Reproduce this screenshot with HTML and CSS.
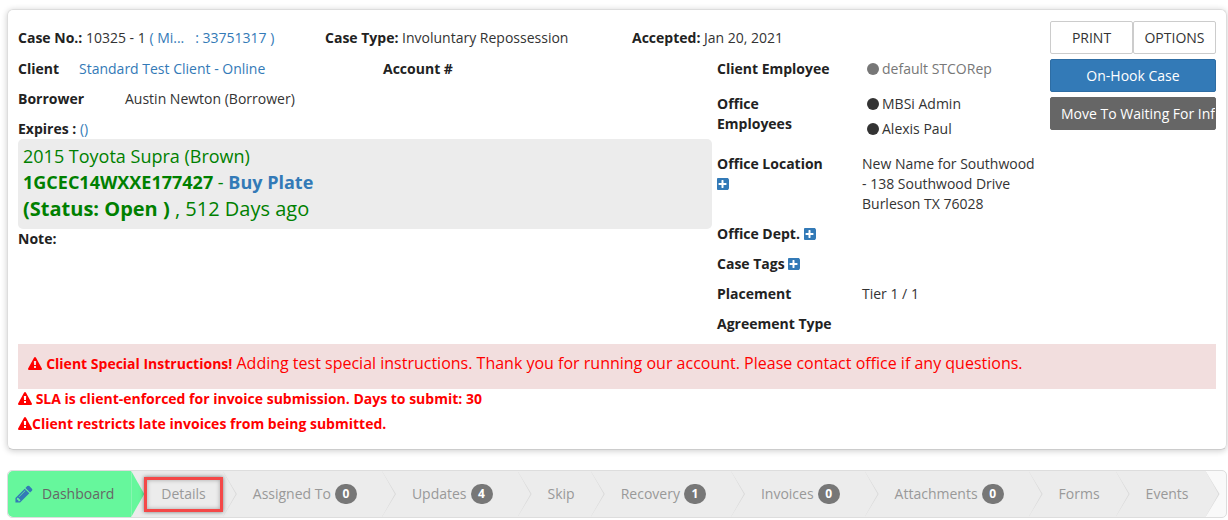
FILE: index.html
```html
<!DOCTYPE html>
<html lang="en">
  <head>
    <meta charset="UTF-8" />
    <title>Case 10325</title>
    <link rel="stylesheet" href="styles.css">
  </head>
  <body class="body">
    <svg class="icon-defs" width="0" height="0">
      <symbol id="i-plus" viewBox="128 128 1536 1536"><path d="M1344 960v-128q0-26-19-45t-45-19h-320v-320q0-26-19-45t-45-19h-128q-26 0-45 19t-19 45v320h-320q-26 0-45 19t-19 45v128q0 26 19 45t45 19h320v320q0 26 19 45t45 19h128q26 0 45-19t19-45v-320h320q26 0 45-19t19-45zm320-576v1024q0 119-84.5 203.5t-203.5 84.5h-1024q-119 0-203.5-84.5t-84.5-203.5v-1024q0-119 84.5-203.5t203.5-84.5h1024q119 0 203.5 84.5t84.5 203.5z"/></symbol>
      <symbol id="i-warn" viewBox="0 0 1792 1792"><path d="M1024 1375v-190q0-14-9.5-23.5t-22.5-9.5h-192q-13 0-22.5 9.5t-9.5 23.5v190q0 14 9.5 23.5t22.5 9.5h192q13 0 22.5-9.5t9.5-23.5zm-2-374l18-459q0-12-10-19-13-11-24-11h-220q-11 0-24 11-10 7-10 21l17 457q0 10 10 16.5t24 6.5h185q14 0 23.5-6.5t10.5-16.5zm-14-934l768 1408q35 63-2 126-17 29-46.5 46t-63.5 17h-1536q-34 0-63.5-17t-46.5-46q-37-63-2-126l768-1408q17-31 47-49t65-18 65 18 47 49z"/></symbol>
    </svg>

    <div class="card">
      <div class="card__top">
        <div class="info">
          <div class="summary">
            <div class="summary__item"><b>Case No.:</b> 10325 - 1 <a class="link">( Mi...&nbsp;&nbsp; : 33751317 )</a></div>
            <div class="summary__item"><b>Case Type:</b> Involuntary Repossession</div>
            <div class="summary__item"><b>Accepted:</b> Jan 20, 2021</div>
          </div>
          <div class="columns">
            <div class="left">
              <div class="row">
                <b class="row__client">Client</b>
                <a class="link row__clientname">Standard Test Client - Online</a>
                <b>Account #</b>
              </div>
              <div class="row">
                <b class="row__borrower">Borrower</b>
                <span>Austin Newton (Borrower)</span>
              </div>
              <div class="row row_tight"><b>Expires :</b>&nbsp;<a class="link">()</a></div>
              <div class="vehicle">
                <div>2015 Toyota Supra (Brown)</div>
                <div><b>1GCEC14WXXE177427</b> - <a class="vehicle__link">Buy Plate</a></div>
                <div class="vehicle__status"><b>(Status: Open )</b> , 512 Days ago</div>
              </div>
              <div class="note"><b>Note:</b></div>
            </div>
            <div class="right">
              <div class="detail">
                <b class="detail__label">Client Employee</b>
                <div class="detail__value"><span class="person person_idle"><i class="dot"></i>default STCORep</span></div>
              </div>
              <div class="detail">
                <b class="detail__label">Office<br />Employees</b>
                <div class="detail__value">
                  <span class="person"><i class="dot"></i>MBSi Admin</span>
                  <span class="person"><i class="dot"></i>Alexis Paul</span>
                </div>
              </div>
              <div class="detail">
                <b class="detail__label">Office Location<br /><svg class="plus"><use href="#i-plus" /></svg></b>
                <div class="detail__text">New Name for Southwood<br />- 138 Southwood Drive<br />Burleson TX 76028</div>
              </div>
              <div class="detail">
                <b class="detail__label">Office Dept. <svg class="plus"><use href="#i-plus" /></svg></b>
              </div>
              <div class="detail">
                <b class="detail__label">Case Tags <svg class="plus"><use href="#i-plus" /></svg></b>
              </div>
              <div class="detail">
                <b class="detail__label">Placement</b>
                <div class="detail__text">Tier 1 / 1</div>
              </div>
              <div class="detail">
                <b class="detail__label">Agreement Type</b>
              </div>
            </div>
          </div>
        </div>
        <div class="actions">
          <div class="actions__pair">
            <button class="button" type="button">PRINT</button>
            <button class="button" type="button">OPTIONS</button>
          </div>
          <button class="button button_blue" type="button">On-Hook Case</button>
          <button class="button button_gray" type="button">Move To Waiting For Info</button>
        </div>
      </div>
      <div class="instructions">
        <svg class="warn"><use href="#i-warn" /></svg>
        <b class="instructions__title">Client Special Instructions!</b> Adding test special instructions. Thank you for running our account. Please contact office if any questions.
      </div>
      <div class="alert"><svg class="warn"><use href="#i-warn" /></svg> SLA is client-enforced for invoice submission. Days to submit: 30</div>
      <div class="alert alert_last"><svg class="warn"><use href="#i-warn" /></svg>Client restricts late invoices from being submitted.</div>
    </div>

    <nav class="tabs">
      <ul class="tabs__list">
        <li class="tab tab_active">
          <svg class="tab__icon" viewBox="0 0 1792 1792"><path d="M491 1536l91-91-235-235-91 91v107h128v128h107zm523-928q0-22-22-22-10 0-17 7l-542 542q-7 7-7 17 0 22 22 22 10 0 17-7l542-542q7-7 7-17zm-54-192l416 416-832 832h-416v-416zm683 96q0 53-37 90l-166 166-416-416 166-165q36-38 90-38 53 0 91 38l235 234q37 39 37 91z"/></svg>
          Dashboard
        </li>
        <li class="tab">Details<span class="tab__mark"></span></li>
        <li class="tab tab_count">Assigned To<span class="badge">0</span></li>
        <li class="tab tab_count">Updates<span class="badge">4</span></li>
        <li class="tab tab_short">Skip</li>
        <li class="tab tab_count">Recovery<span class="badge">1</span></li>
        <li class="tab tab_count">Invoices<span class="badge">0</span></li>
        <li class="tab tab_count">Attachments<span class="badge">0</span></li>
        <li class="tab tab_short">Forms</li>
        <li class="tab">Events</li>
      </ul>
    </nav>
  </body>
</html>
```

FILE: styles.css
```css
* {
  box-sizing: border-box;
}
.body {
  margin: 0;
  padding: 9px 1px 0 7px;
  background-color: #fff;
  font-family: "Open Sans", sans-serif;
  font-size: 14px;
  line-height: 20px;
  color: #333;
  overflow: hidden;
}
.icon-defs {
  position: absolute;
}
b {
  color: #222;
}
.link {
  color: #337ab7;
}

/* case card */
.card {
  height: 441px;
  padding: 11px 10px 0;
  border: 1px solid #ddd;
  border-bottom-color: #ccc;
  border-radius: 6px;
  box-shadow: 0 1px 6px rgba(0, 0, 0, 0.2);
}
.card__top {
  display: flex;
  height: 323px;
}
.info {
  width: 1032px;
  padding-top: 7px;
}
.summary {
  display: flex;
  height: 31px;
}
.summary__item {
  width: 307px;
}
.columns {
  display: flex;
}
.left {
  width: 694px;
}
.right {
  margin-left: 5px;
}
.row {
  display: flex;
  margin-bottom: 10px;
}
.row_tight {
  margin-bottom: 0;
}
.row__client {
  width: 61px;
}
.row__clientname {
  width: 304px;
}
.row__borrower {
  width: 107px;
}
.vehicle {
  height: 90px;
  padding: 4px 5px;
  border-radius: 5px;
  background-color: #ececec;
  font-size: 18px;
  line-height: 26px;
  color: green;
}
.vehicle b {
  color: green;
}
.vehicle__status {
  margin-top: 1px;
  font-size: 20px;
}
.vehicle__link {
  color: #337ab7;
  font-weight: bold;
}

/* right hand details */
.detail {
  display: flex;
  margin-bottom: 10px;
}
.detail__label {
  flex: none;
  width: 145px;
}
.detail__value {
  display: flex;
  flex-direction: column;
  gap: 5px;
  padding-left: 5px;
}
.detail:nth-child(2) {
  margin: 15px 0;
}
.person {
  display: flex;
  align-items: center;
}
.person_idle {
  color: #777;
}
.dot {
  width: 12px;
  height: 12px;
  margin-right: 3px;
  border-radius: 50%;
  background-color: #333;
}
.person_idle .dot {
  background-color: #777;
}
.plus {
  width: 12px;
  height: 12px;
  vertical-align: -1px;
  fill: #337ab7;
}

/* buttons */
.actions {
  display: flex;
  flex-direction: column;
  gap: 5px;
  width: 166px;
}
.actions__pair {
  display: flex;
}
.button {
  flex: none;
  width: 100%;
  height: 33px;
  padding: 0 10px;
  overflow: hidden;
  border: 1px solid #ccc;
  border-radius: 2px;
  background-color: #fff;
  font-family: inherit;
  font-size: 14px;
  color: #333;
  text-align: center;
  white-space: nowrap;
}
.actions__pair .button {
  width: 83px;
  padding: 0;
}
.button_blue {
  border-color: #2e6da4;
  background-color: #337ab7;
  color: #fff;
}
.button_gray {
  padding: 0 0 0 10px;
  border-color: #666;
  background-color: #666;
  color: #fff;
  text-align: left;
}

/* warnings */
.warn {
  width: 14px;
  height: 14px;
  vertical-align: -2px;
  fill: #f00;
}
.instructions {
  height: 45px;
  padding: 0 10px;
  background-color: #f2dede;
  font-size: 16px;
  line-height: 38px;
  color: #f00;
}
.instructions__title {
  font-size: 14px;
  color: #f00;
}
.alert {
  margin-bottom: 5px;
  font-weight: bold;
  color: #f00;
}

/* bottom tabs */
.tabs {
  margin-top: 20px;
  border: 1px solid #ddd;
  border-radius: 5px;
  background-color: #f9f9f9;
}
.tabs__list {
  display: flex;
  width: fit-content;
  height: 46px;
  margin: 0;
  padding: 0;
  list-style: none;
  background-color: #ececec;
  border-radius: 5px 0 0 5px;
}
.tab {
  position: relative;
  display: flex;
  align-items: center;
  padding: 0 17px 0 30px;
  color: #999;
  white-space: nowrap;
}
.tab_count {
  padding-right: 25px;
}
.tab_short {
  padding-right: 16px;
}
.tab::before,
.tab::after {
  content: "";
  position: absolute;
  top: 0;
  bottom: 0;
  clip-path: polygon(0 0, 100% 50%, 0 100%);
}
.tab::before {
  right: -14px;
  width: 14px;
  background-color: #d8d8d8;
}
.tab::after {
  right: -13px;
  width: 13px;
  background-color: #ececec;
}
.tab_active {
  padding: 0 17px 0 6px;
  border-radius: 5px 0 0 5px;
  background-color: #66f79c;
  color: #666;
}
.tab_active::before {
  display: none;
}
.tab_active::after {
  background-color: #66f79c;
}
.tab__icon {
  width: 20px;
  height: 20px;
  margin-right: 8px;
  fill: #337ab7;
}
.tab__mark {
  position: absolute;
  top: 6px;
  right: 0;
  bottom: 5px;
  left: 13px;
  border: 3px solid #f44848;
  box-shadow: 0 0 4px rgba(0, 0, 0, 0.5), inset 0 0 4px rgba(0, 0, 0, 0.3);
  z-index: 2;
}
.badge {
  display: flex;
  align-items: center;
  justify-content: center;
  width: 22px;
  height: 20px;
  margin-left: 4px;
  border-radius: 10px;
  background-color: #777;
  font-size: 12px;
  font-weight: bold;
  color: #fff;
}
```
